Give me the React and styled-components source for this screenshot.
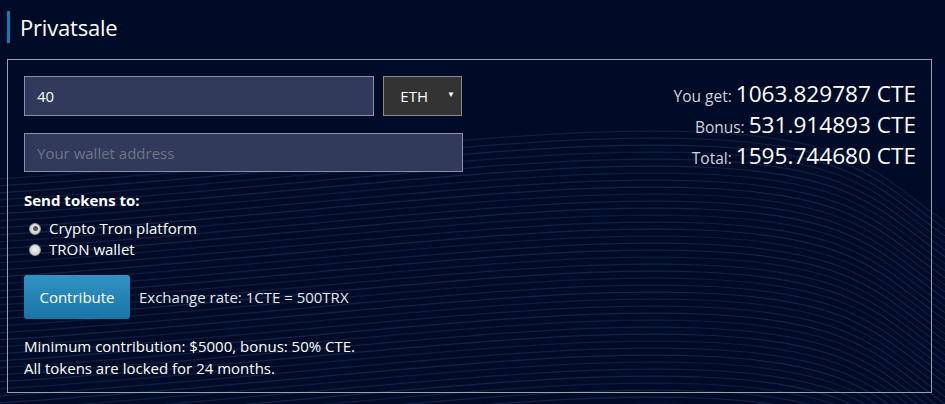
import React from 'react';
import styled, { createGlobalStyle } from 'styled-components';

const GlobalStyle = createGlobalStyle`
  html, body {
    margin: 0;
    padding: 0;
    background: #000c27;
  }
  body {
    font-family: "Open Sans", "Noto Sans", sans-serif;
    color: #ffffff;
    overflow: hidden;
  }
`;

const Page = styled.div`
  position: relative;
  width: 945px;
  height: 404px;
  background: #000c27;
  overflow: hidden;
`;

const Waves = styled.svg`
  position: absolute;
  left: 0;
  top: 0;
  pointer-events: none;
`;

const Content = styled.div`
  position: relative;
  padding: 11px 0 0 7px;
`;

const Title = styled.h2`
  margin: 0;
  height: 32px;
  border-left: 3px solid #1679b5;
  padding-left: 10px;
  font-size: 22px;
  font-weight: 400;
  line-height: 32px;
  letter-spacing: -0.2px;
`;

const Frame = styled.div`
  margin-top: 16px;
  width: 925px;
  height: 334px;
  border: 1px solid #9ea2b0;
  box-sizing: border-box;
  display: flex;
  justify-content: space-between;
  padding: 16px 15px 0 16px;
`;

const LeftCol = styled.div`
  width: 438px;
  display: flex;
  flex-direction: column;
`;

const Row = styled.div`
  display: flex;
  gap: 9px;
`;

const TextField = styled.input`
  box-sizing: border-box;
  width: ${p => p.$width}px;
  height: ${p => p.$height}px;
  background: #313a5b;
  border: 1px solid #8a91a8;
  color: #ffffff;
  font-family: inherit;
  font-size: 15px;
  padding: 0 12px;
  outline: none;
  margin-top: ${p => p.$top || 0}px;
  &::placeholder {
    color: #6e7488;
  }
`;

const Select = styled.div`
  box-sizing: border-box;
  width: 79px;
  height: 40px;
  background: #333333;
  border: 1px solid #8a8a8a;
  display: flex;
  align-items: center;
  padding-left: 16px;
  font-size: 15px;
  position: relative;
`;

const Caret = styled.span`
  position: absolute;
  right: 6px;
  top: 11px;
  font-size: 8px;
  color: #ffffff;
`;

const SendLabel = styled.div`
  margin-top: 19px;
  font-size: 15px;
  font-weight: 700;
  line-height: 18px;
`;

const RadioList = styled.div`
  margin-top: 9px;
  display: flex;
  flex-direction: column;
  padding-left: 5px;
`;

const RadioRow = styled.label`
  display: flex;
  align-items: center;
  gap: 8px;
  font-size: 15px;
  line-height: 21px;
`;

const RadioDot = styled.span`
  width: 12px;
  height: 12px;
  border-radius: 50%;
  background: radial-gradient(circle at 50% 40%, #f2f2f2, #c4c4c4);
  border: 1px solid #9a9a9a;
  box-sizing: border-box;
  display: flex;
  align-items: center;
  justify-content: center;
  &::after {
    content: '';
    width: 5px;
    height: 5px;
    border-radius: 50%;
    background: ${p => (p.$checked ? '#555555' : 'transparent')};
  }
`;

const ActionRow = styled.div`
  margin-top: 15px;
  display: flex;
  align-items: center;
  gap: 9px;
`;

const Button = styled.button`
  width: 106px;
  height: 44px;
  border: none;
  border-radius: 3px;
  background: linear-gradient(#3093c4, #1a75a7);
  color: #ffffff;
  font-family: inherit;
  font-size: 15px;
  padding: 0;
`;

const Rate = styled.span`
  font-size: 15px;
  color: #e6e8ee;
`;

const Notes = styled.div`
  margin-top: 16px;
  font-size: 15px;
  line-height: 22px;
`;

const RightCol = styled.div`
  display: flex;
  flex-direction: column;
  align-items: flex-end;
  padding-top: 2px;
`;

const Stat = styled.div`
  height: 31px;
  display: flex;
  align-items: baseline;
  gap: 4px;
`;

const StatLabel = styled.span`
  font-size: 15.5px;
  color: #d0d3dc;
`;

const StatValue = styled.span`
  font-size: 22.6px;
  color: #ffffff;
`;

const wavePaths = Array.from({ length: 48 }, (_, i) => {
  const y = 150 + i * 7;
  return `M -20 ${y + 30} C 250 ${y + 15}, 520 ${y - 25}, 700 ${y - 18} S 880 ${y + 35}, 980 ${y + 95}`;
});

const stats = [
  { label: 'You get:', value: '1063.829787 CTE' },
  { label: 'Bonus:', value: '531.914893 CTE' },
  { label: 'Total:', value: '1595.744680 CTE' },
];

export default function App() {
  return (
    <Page>
      <GlobalStyle />
      <Waves width="945" height="404" viewBox="0 0 945 404">
        {wavePaths.map((d, i) => (
          <path key={i} d={d} fill="none" stroke="#1c2c50" strokeWidth="1.2" opacity={0.55 + (i % 3) * 0.1} />
        ))}
      </Waves>
      <Content>
        <Title>Privatsale</Title>
        <Frame>
          <LeftCol>
            <Row>
              <TextField $width={352} $height={40} defaultValue="40" />
              <Select>
                ETH
                <Caret>▼</Caret>
              </Select>
            </Row>
            <TextField $width={439} $height={39} $top={17} placeholder="Your wallet address" />
            <SendLabel>Send tokens to:</SendLabel>
            <RadioList>
              <RadioRow>
                <RadioDot $checked />
                Crypto Tron platform
              </RadioRow>
              <RadioRow>
                <RadioDot />
                TRON wallet
              </RadioRow>
            </RadioList>
            <ActionRow>
              <Button>Contribute</Button>
              <Rate>Exchange rate: 1CTE = 500TRX</Rate>
            </ActionRow>
            <Notes>
              Minimum contribution: $5000, bonus: 50% CTE.
              <br />
              All tokens are locked for 24 months.
            </Notes>
          </LeftCol>
          <RightCol>
            {stats.map(s => (
              <Stat key={s.label}>
                <StatLabel>{s.label}</StatLabel>
                <StatValue>{s.value}</StatValue>
              </Stat>
            ))}
          </RightCol>
        </Frame>
      </Content>
    </Page>
  );
}
